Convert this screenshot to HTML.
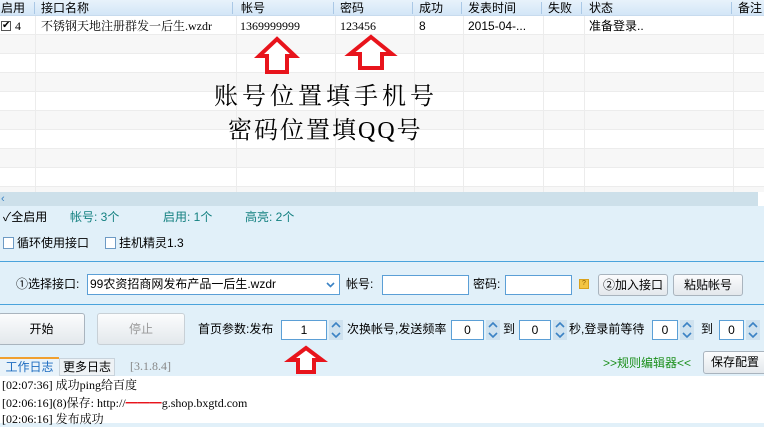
<!DOCTYPE html>
<html><head><meta charset="utf-8"><style>
*{margin:0;padding:0;box-sizing:border-box}
body{width:764px;height:423px;overflow:hidden;position:relative;background:#e1f0f9;font-family:"Liberation Sans","Noto Sans CJK SC",sans-serif;font-size:12px;color:#000}
.a{position:absolute;white-space:nowrap}
.hd{position:absolute;left:0;top:0;width:764px;height:16px;background:linear-gradient(#e8f2fb,#d3e6f7);border-bottom:1px solid #c7dbee}
.row{position:absolute;left:0;width:764px;height:19px;border-bottom:1px solid #ececec}
.vl{position:absolute;top:0;width:1px;height:192px;background:#ececec}
.hv{position:absolute;top:2px;width:1px;height:12px;background:#aac8e6}
.inp{position:absolute;background:#fff;border:1px solid #5b9fd6;text-align:center}
.btn{position:absolute;border:1px solid #a9b4be;border-radius:3px;background:linear-gradient(#fbfcfd,#e3e8ec);text-align:center}
.sp{position:absolute;width:14px;height:20px;background:#cfe2ef}
.cb{position:absolute;width:11px;height:12px;border:1px solid #6d9ac4;background:#fff}
.log{font-family:"Liberation Serif","Noto Serif CJK SC",serif}
</style></head><body>
<div style="position:absolute;left:0;top:0;width:764px;height:192px;background:#fff"></div>
<div class="row" style="top:16px;background:#fff"></div>
<div class="row" style="top:35px;background:#f7f7f7"></div>
<div class="row" style="top:54px;background:#fff"></div>
<div class="row" style="top:73px;background:#f7f7f7"></div>
<div class="row" style="top:92px;background:#fff"></div>
<div class="row" style="top:111px;background:#f7f7f7"></div>
<div class="row" style="top:130px;background:#fff"></div>
<div class="row" style="top:149px;background:#f7f7f7"></div>
<div class="row" style="top:168px;background:#fff"></div>
<div class="row" style="top:187px;background:#f7f7f7"></div>
<div class="vl" style="left:35px"></div><div class="vl" style="left:236px"></div><div class="vl" style="left:335px"></div><div class="vl" style="left:414px"></div><div class="vl" style="left:463px"></div><div class="vl" style="left:543px"></div><div class="vl" style="left:584px"></div><div class="vl" style="left:733px"></div>
<div class="hd"></div>
<div class="hv" style="left:34px"></div><div class="hv" style="left:232px"></div><div class="hv" style="left:333px"></div><div class="hv" style="left:412px"></div><div class="hv" style="left:461px"></div><div class="hv" style="left:541px"></div><div class="hv" style="left:581px"></div><div class="hv" style="left:731px"></div>
<div class="a" style="left:1px;top:0;line-height:16px">启用</div>
<div class="a" style="left:41px;top:0;line-height:16px">接口名称</div>
<div class="a" style="left:241px;top:0;line-height:16px">帐号</div>
<div class="a" style="left:340px;top:0;line-height:16px">密码</div>
<div class="a" style="left:419px;top:0;line-height:16px">成功</div>
<div class="a" style="left:468px;top:0;line-height:16px">发表时间</div>
<div class="a" style="left:548px;top:0;line-height:16px">失败</div>
<div class="a" style="left:589px;top:0;line-height:16px">状态</div>
<div class="a" style="left:738px;top:0;line-height:16px">备注</div>
<div class="a" style="left:1px;top:21px;width:10px;height:10px;border:1px solid #555;background:#fff;font-size:10px;line-height:8px;text-align:center">✔</div>
<div class="a log" style="left:15px;top:17px;line-height:18px">4</div>
<div class="a log" style="left:41px;top:17px;line-height:18px">不锈钢天地注册群发一后生.wzdr</div>
<div class="a log" style="left:240px;top:17px;line-height:18px">1369999999</div>
<div class="a log" style="left:340px;top:17px;line-height:18px">123456</div>
<div class="a" style="left:419px;top:17px;line-height:18px">8</div>
<div class="a" style="left:468px;top:17px;line-height:18px">2015-04-...</div>
<div class="a" style="left:589px;top:17px;line-height:18px">准备登录..</div>
<svg class="a" style="left:0;top:0" width="764" height="423">
<g fill="#fff" stroke="#e8141c" stroke-width="4">
<polygon points="277,39 295,56 287,56 287,72 267,72 267,56 259,56"/>
<polygon points="371,37 392,54 382,54 382,68 360,68 360,54 350,54"/>
<polygon points="306,348 322,360 314,360 314,372 298,372 298,360 290,360"/>
</g></svg>
<div class="a" style="left:214px;top:82px;font-family:'Liberation Serif','Noto Serif CJK SC',serif;font-size:24px;letter-spacing:4px;line-height:30px">账号位置填手机号</div>
<div class="a" style="left:228px;top:116px;font-family:'Liberation Serif','Noto Serif CJK SC',serif;font-size:24px;letter-spacing:2px;line-height:30px">密码位置填QQ号</div>
<div class="a" style="left:0;top:192px;width:758px;height:14px;background:#cde0ea;color:#3b82c4;font-size:11px;line-height:14px;padding-left:1px">‹</div>
<div class="a" style="left:758px;top:192px;width:6px;height:14px;background:#fff"></div>
<div class="a" style="left:3px;top:209px;line-height:16px">✓全启用</div>
<div class="a" style="left:70px;top:209px;line-height:16px;color:#138080">帐号: 3个</div>
<div class="a" style="left:163px;top:209px;line-height:16px;color:#138080">启用: 1个</div>
<div class="a" style="left:245px;top:209px;line-height:16px;color:#138080">高亮: 2个</div>
<div class="cb" style="left:3px;top:237px"></div><div class="a" style="left:17px;top:235px;line-height:16px">循环使用接口</div>
<div class="cb" style="left:105px;top:237px"></div><div class="a" style="left:119px;top:235px;line-height:16px">挂机精灵1.3</div>
<div class="a" style="left:0;top:261px;width:764px;height:1px;background:#4aa3dc"></div>
<div class="a" style="left:16px;top:276px;line-height:16px">①选择接口:</div>
<div class="inp" style="left:87px;top:274px;width:253px;height:21px;text-align:left;padding-left:2px;line-height:19px">99农资招商网发布产品一后生.wzdr<svg style="position:absolute;right:4px;top:7px" width="9" height="6"><path d="M1 1L4.5 4.5L8 1" stroke="#3b82c4" stroke-width="1.6" fill="none"/></svg></div>
<div class="a" style="left:346px;top:276px;line-height:16px">帐号:</div>
<div class="inp" style="left:382px;top:275px;width:87px;height:20px"></div>
<div class="a" style="left:473px;top:276px;line-height:16px">密码:</div>
<div class="inp" style="left:505px;top:275px;width:67px;height:20px"></div>
<div class="a" style="left:579px;top:279px;width:10px;height:10px;background:#f3c544;border:1px solid #d9a21e;font-size:7px;line-height:8px;text-align:center;color:#8a5a00">?</div>
<div class="btn" style="left:598px;top:274px;width:70px;height:22px;line-height:20px">②加入接口</div>
<div class="btn" style="left:673px;top:274px;width:70px;height:22px;line-height:20px">粘贴帐号</div>
<div class="a" style="left:0;top:304px;width:764px;height:1px;background:#4aa3dc"></div>
<div class="btn" style="left:-2px;top:313px;width:87px;height:32px;line-height:30px">开始</div>
<div class="btn" style="left:97px;top:313px;width:88px;height:32px;line-height:30px;color:#999;border-color:#c8d0d6">停止</div>
<div class="a" style="left:198px;top:321px;line-height:16px">首页参数:发布</div>
<div class="inp" style="left:281px;top:320px;width:46px;height:20px;line-height:18px">1</div>
<div class="a" style="left:347px;top:321px;line-height:16px">次换帐号,发送频率</div>
<div class="inp" style="left:451px;top:320px;width:33px;height:20px;line-height:18px">0</div>
<div class="a" style="left:503px;top:321px;line-height:16px">到</div>
<div class="inp" style="left:519px;top:320px;width:32px;height:20px;line-height:18px">0</div>
<div class="a" style="left:569px;top:321px;line-height:16px">秒,登录前等待</div>
<div class="inp" style="left:652px;top:320px;width:26px;height:20px;line-height:18px">0</div>
<div class="a" style="left:701px;top:321px;line-height:16px">到</div>
<div class="inp" style="left:719px;top:320px;width:25px;height:20px;line-height:18px">0</div>
<svg class="a" style="left:0;top:0" width="764" height="423"><defs><g id="s"><rect width="14" height="20" fill="#cfe2ef"/><path d="M3 7L7 3L11 7M3 13L7 17L11 13" stroke="#3b82c4" stroke-width="1.6" fill="none"/></g></defs>
<use href="#s" x="329" y="320"/><use href="#s" x="486" y="320"/><use href="#s" x="553" y="320"/><use href="#s" x="680" y="320"/><use href="#s" x="746" y="320"/></svg>
<div class="a" style="left:0;top:357px;width:59px;height:19px;background:#e9f3fa;border-top:2px solid #f0a030;color:#1d6cc0;text-align:center;line-height:17px">工作日志</div>
<div class="a" style="left:59px;top:358px;width:56px;height:18px;background:#eef2f5;border:1px solid #c8d3dc;text-align:center;line-height:16px">更多日志</div>
<div class="a log" style="left:130px;top:358px;line-height:16px;color:#888">[3.1.8.4]</div>
<div class="a" style="left:603px;top:355px;line-height:16px;color:#1b8f1b">&gt;&gt;规则编辑器&lt;&lt;</div>
<div class="btn" style="left:703px;top:351px;width:64px;height:23px;line-height:21px">保存配置</div>
<div class="a" style="left:0;top:376px;width:764px;height:47px;background:#fff"></div>
<div class="a log" style="left:2px;top:377px;line-height:16px">[02:07:36] 成功ping给百度</div>
<div class="a log" style="left:2px;top:395px;line-height:16px">[02:06:16](8)保存: http://<span style="color:#e8141c">&#9473;&#9473;&#9473;</span>g.shop.bxgtd.com</div>
<div class="a log" style="left:2px;top:411px;line-height:16px">[02:06:16] 发布成功</div>
</body></html>
